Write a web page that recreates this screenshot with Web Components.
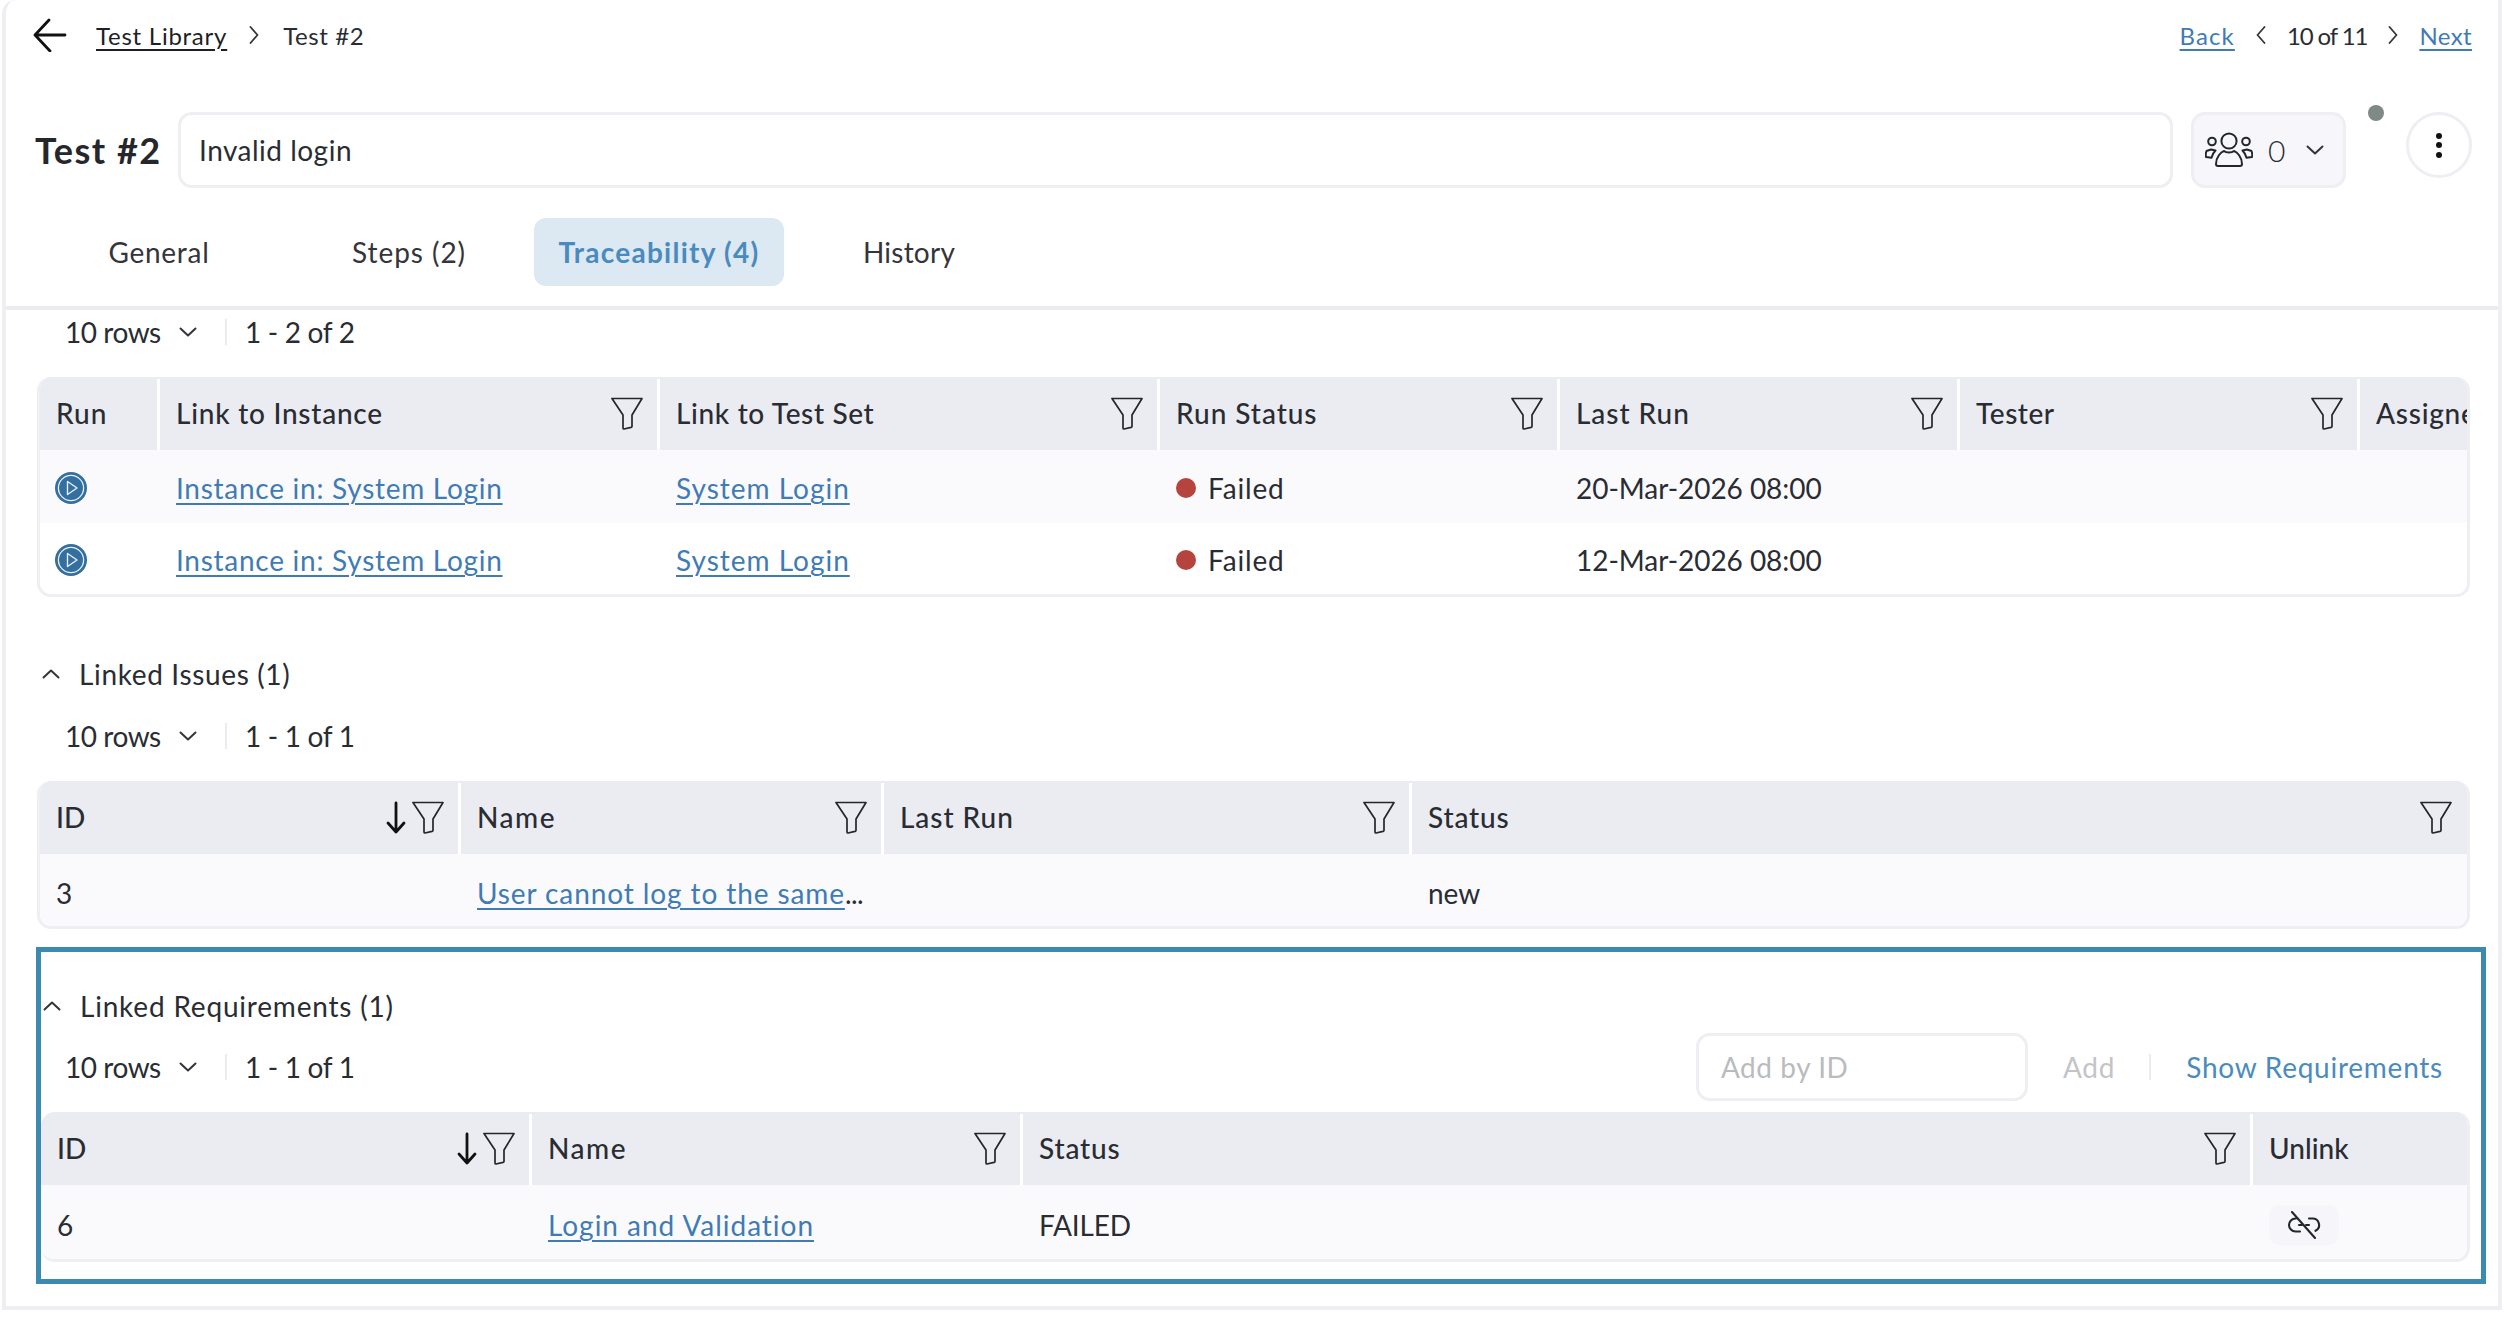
<!DOCTYPE html>
<html lang="en">
<head>
<meta charset="utf-8">
<title>Test #2</title>
<style>
html,body{margin:0;padding:0;background:#fff}
body{font-family:"Lato","Noto Sans",sans-serif;color:#2a2c33;font-size:28px}
</style>
</head>
<body>
<app-page>
  <crumb-bar></crumb-bar>
  <title-row number="Test #2" value="Invalid login" members="0"></title-row>
  <tab-bar>
    <tab-item style="letter-spacing:.75px">General</tab-item>
    <tab-item style="letter-spacing:.95px">Steps (2)</tab-item>
    <tab-item active style="letter-spacing:1.25px">Traceability (4)</tab-item>
    <tab-item style="letter-spacing:.25px">History</tab-item>
  </tab-bar>
  <page-body>
    <pager-bar rows="10 rows" range="1 - 2 of 2" style="--inset:29px"></pager-bar>
    <data-table style="--cols:120px 500px 500px 400px 400px 400px 400px;--row-h:73px;--row-top:3px">
      <t-row head>
        <t-cell head style="letter-spacing:1px">Run</t-cell>
        <t-cell head filter style="letter-spacing:.75px">Link to Instance</t-cell>
        <t-cell head filter style="letter-spacing:.65px">Link to Test Set</t-cell>
        <t-cell head filter style="letter-spacing:.95px">Run Status</t-cell>
        <t-cell head filter style="letter-spacing:.95px">Last Run</t-cell>
        <t-cell head filter style="letter-spacing:.55px">Tester</t-cell>
        <t-cell head style="letter-spacing:.75px">Assigned</t-cell>
      </t-row>
      <t-row>
        <t-cell><ui-icon name="play"></ui-icon></t-cell>
        <t-cell style="letter-spacing:.73px"><app-link>Instance in: System Login</app-link></t-cell>
        <t-cell style="letter-spacing:1px"><app-link>System Login</app-link></t-cell>
        <t-cell style="letter-spacing:.85px"><status-dot>Failed</status-dot></t-cell>
        <t-cell style="letter-spacing:-.05px">20-Mar-2026 08:00</t-cell>
        <t-cell></t-cell><t-cell></t-cell>
      </t-row>
      <t-row plain style="height:71px">
        <t-cell><ui-icon name="play"></ui-icon></t-cell>
        <t-cell style="letter-spacing:.73px"><app-link>Instance in: System Login</app-link></t-cell>
        <t-cell style="letter-spacing:1px"><app-link>System Login</app-link></t-cell>
        <t-cell style="letter-spacing:.85px"><status-dot>Failed</status-dot></t-cell>
        <t-cell style="letter-spacing:-.05px">12-Mar-2026 08:00</t-cell>
        <t-cell></t-cell><t-cell></t-cell>
      </t-row>
    </data-table>

    <section-head style="--inset:6px;margin-top:56px;letter-spacing:.65px">Linked Issues (1)</section-head>
    <pager-bar rows="10 rows" range="1 - 1 of 1" style="--inset:29px;margin-top:17px"></pager-bar>
    <data-table style="--cols:421px 423px 528px 1058px;--row-h:72px;--row-top:5px">
      <t-row head>
        <t-cell head sort filter>ID</t-cell>
        <t-cell head filter style="letter-spacing:1.55px">Name</t-cell>
        <t-cell head filter style="letter-spacing:.95px">Last Run</t-cell>
        <t-cell head filter last style="letter-spacing:.85px;--pad-r:18px">Status</t-cell>
      </t-row>
      <t-row>
        <t-cell>3</t-cell>
        <t-cell style="letter-spacing:.9px"><app-link>User cannot log to the same</app-link><span style="letter-spacing:-.5px">...</span></t-cell>
        <t-cell></t-cell>
        <t-cell>new</t-cell>
      </t-row>
    </data-table>

    <focus-box>
      <section-head style="--inset:2px;letter-spacing:.8px">Linked Requirements (1)</section-head>
      <pager-bar rows="10 rows" range="1 - 1 of 1" style="--inset:24px;--pad-r:38px;margin-top:16px">
        <add-by-id></add-by-id>
      </pager-bar>
      <data-table flush style="--cols:491px 491px 1230px 217px;--row-h:74px;--row-top:6px">
        <t-row head>
          <t-cell head sort filter>ID</t-cell>
          <t-cell head filter style="letter-spacing:1.55px">Name</t-cell>
          <t-cell head filter style="letter-spacing:.85px">Status</t-cell>
          <t-cell head last style="letter-spacing:.05px">Unlink</t-cell>
        </t-row>
        <t-row>
          <t-cell>6</t-cell>
          <t-cell style="letter-spacing:.98px"><app-link>Login and Validation</app-link></t-cell>
          <t-cell style="letter-spacing:-.15px">FAILED</t-cell>
          <t-cell><unlink-button></unlink-button></t-cell>
        </t-row>
      </data-table>
    </focus-box>
  </page-body>
</app-page>

<script>
const ICONS = {
  back: '<svg width="34" height="34" viewBox="0 0 34 34" fill="none" stroke="#111" stroke-width="2.8" stroke-linecap="round" stroke-linejoin="round"><path d="M32 17H2M16 2 2 17l15 16"/></svg>',
  right: '<svg width="10" height="18" viewBox="0 0 10 18" fill="none" stroke="#33353b" stroke-width="1.8" stroke-linecap="round" stroke-linejoin="round"><path d="M1.5 1 8.5 9 1.500 17"/></svg>',
  left: '<svg width="10" height="18" viewBox="0 0 10 18" fill="none" stroke="#33353b" stroke-width="1.8" stroke-linecap="round" stroke-linejoin="round"><path d="M8.5 1 1.5 9 8.5 17"/></svg>',
  down: '<svg width="18" height="10" viewBox="0 0 18 10" fill="none" stroke="#33353b" stroke-width="2" stroke-linecap="round" stroke-linejoin="round"><path d="M1.5 1.5 9 8.5 16.5 1.5"/></svg>',
  up: '<svg width="18" height="10" viewBox="0 0 18 10" fill="none" stroke="#33353b" stroke-width="2" stroke-linecap="round" stroke-linejoin="round"><path d="M1.5 8.5 9 1.5 16.5 8.5"/></svg>',
  filter: '<svg width="32" height="33" viewBox="0 0 32 33" fill="none" stroke="#23262c" stroke-width="1.7" stroke-linejoin="round"><path d="M1 1.5H31L21 18V29.5Q21 30 20 30.4L13 32Q12 32 12 31V18Z"/></svg>',
  sort: '<svg width="20" height="33" viewBox="0 0 20 33" fill="none" stroke="#111" stroke-width="2.8" stroke-linecap="round" stroke-linejoin="round"><path d="M10 2V31M2 22l8 9 8-9"/></svg>',
  play: '<svg width="32" height="32" viewBox="0 0 32 32"><circle cx="16" cy="16" r="16" fill="#336f9f"/><circle cx="16" cy="16" r="12.6" fill="none" stroke="#e8f0f6" stroke-width="1.3"/><path d="M12.5 9.5 22 16l-9.5 6.5Z" fill="none" stroke="#e8f0f6" stroke-width="1.4" stroke-linejoin="round"/></svg>',
  users: '<svg width="48" height="36" viewBox="0 0 48 36" fill="none" stroke="#23262c" stroke-width="2" stroke-linecap="round" stroke-linejoin="round"><circle cx="24" cy="9" r="7.6"/><circle cx="7" cy="9.5" r="3.8"/><circle cx="41" cy="9.5" r="3.8"/><path d="M11 32c0-7 5-12 8-13 2 2 8 2 10 0 3 1 8 6 8 13 0 1.500-1 2-2 2H13c-1 0-2-.5-2-2Z"/><path d="M6 17.500 1.500 19C.7 21 .5 23 1 25l5.500.8C7 23 8 21 10.500 18.500Z"/><path d="M42 17.500 46.500 19c.8 2 1 4 .5 6l-5.500.8C41 23 40 21 37.500 18.500Z"/></svg>',
  unlink: '<svg width="34" height="28" viewBox="0 0 34 28" fill="none" stroke="#23262c" stroke-width="2.1" stroke-linecap="round" stroke-linejoin="round"><path d="M9 7.500H8.500a6.500 6.500 0 0 0 0 13h4.500"/><path d="M22 7.500h3.500a6.500 6.500 0 0 1 3 12.300"/><path d="M12 14h3M19 14h3"/><path d="M5 1l23 26"/></svg>'
};

function define(tag, css, html) {
  class El extends HTMLElement {
    constructor() {
      super();
      this.attachShadow({ mode: 'open' });
    }
    connectedCallback() {
      const h = typeof html === 'function' ? html(this) : html;
      this.shadowRoot.innerHTML = '<style>' + css + '</style>' + h;
    }
  }
  customElements.define(tag, El);
}

define('app-page', `
  :host{display:flex;flex-direction:column;box-sizing:border-box;width:2500px;height:1310px;margin-left:2px;
    border:solid #eeeef3;border-width:0 4px 4px 4px;border-top-left-radius:14px;background:#fff;overflow:hidden}
`, '<slot></slot>');

define('crumb-bar', `
  :host{display:flex;align-items:center;height:70px;padding:0 26px 0 27px;font-size:24px}
  .back{display:flex;margin-right:29px}
  u{text-underline-offset:4px;text-decoration-thickness:2px;color:#1d1f24;letter-spacing:.75px}
  .chev{display:flex;margin:0 24px 0 22px}
  .grow{flex:1}
  .crumb{letter-spacing:.6px}
  .pos{letter-spacing:-1.1px}
`, () => `
  <span class="back">${ICONS.back}</span>
  <u>Test Library</u><span class="chev">${ICONS.right}</span><span class="crumb">Test #2</span>
  <span class="grow"></span>
  <u style="color:#3f7bb5;letter-spacing:1.1px">Back</u>
  <span class="chev" style="margin:0 21px">${ICONS.left}</span>
  <span class="pos">10 of 11</span>
  <span class="chev" style="margin:0 21px">${ICONS.right}</span>
  <u style="color:#3f7bb5;letter-spacing:.4px">Next</u>
`);

define('title-row', `
  :host{display:flex;align-items:flex-start;height:76px;margin-top:42px;padding:0 28px 0 29px}
  h1{margin:0;font-size:36px;font-weight:700;letter-spacing:1.5px;line-height:76px;width:143px;flex:none;color:#25272d;white-space:nowrap}
  .field{box-sizing:border-box;flex:none;width:1995px;height:76px;border:3px solid #eeeef3;border-radius:14px;
    display:flex;align-items:center;padding-left:18px;font-size:28px;letter-spacing:.5px}
  .members{box-sizing:border-box;flex:none;width:155px;height:76px;margin-left:18px;background:#f7f7fb;border:3px solid #eeeef3;
    border-radius:14px;display:flex;align-items:center;padding-left:11px;font-size:30px;font-weight:300}
  .members .n{margin:0 21px 0 15px}
  .dot{flex:none;width:16px;height:16px;border-radius:50%;background:#7f8a87;margin:-7px 0 0 22px}
  .kebab{flex:none;box-sizing:border-box;width:66px;height:66px;margin:0 0 0 22px;border:3px solid #eeeef3;border-radius:50%;
    display:flex;flex-direction:column;align-items:center;justify-content:center;gap:3.500px}
  .kebab i{width:6px;height:6px;background:#111;border-radius:50%}
`, (el) => `
  <h1>${el.getAttribute('number')}</h1>
  <div class="field">${el.getAttribute('value')}</div>
  <div class="members">${ICONS.users}<span class="n">${el.getAttribute('members')}</span>${ICONS.down}</div>
  <div class="dot"></div>
  <div class="kebab"><i></i><i></i><i></i></div>
`);

define('tab-bar', `
  :host{display:grid;grid-template-columns:repeat(4,250px);height:88px;margin-top:30px;padding:0 0 0 28px;
    border-bottom:4px solid #ebebf1;align-items:start}
`, '<slot></slot>');

define('tab-item', `
  :host{display:flex;align-items:center;justify-content:center;height:68px;border-radius:12px;font-size:28px;color:#33353b}
  :host([active]){background:#dce8f2;color:#4a8bbf;font-weight:700}
`, '<slot></slot>');

define('page-body', `
  :host{display:block;padding-left:30px;width:2450px}
`, '<slot></slot>');

define('pager-bar', `
  :host{display:flex;align-items:center;height:44px;padding-left:var(--inset,29px);font-size:28px;padding-right:var(--pad-r,27px)}
  .rows{width:96px;flex:none;white-space:nowrap;letter-spacing:-.45px}
  .chev{display:flex;margin-left:18px}
  .sep{width:2px;height:26px;background:#ebebf1;margin:0 18px 0 28px}
  .range{letter-spacing:-.3px}
  .grow{flex:1}
`, (el) => `
  <span class="rows">${el.getAttribute('rows')}</span><span class="chev">${ICONS.down}</span>
  <span class="sep"></span><span class="range">${el.getAttribute('range')}</span>
  <span class="grow"></span><slot></slot>
`);

define('add-by-id', `
  :host{display:flex;align-items:center;font-size:28px}
  .in{box-sizing:border-box;width:332px;height:68px;border:3px solid #eeeef3;border-radius:14px;color:#b9bbc0;
    display:flex;align-items:center;padding-left:22px;letter-spacing:.55px}
  .add{color:#c3c4c8;margin:0 34px 0 35px;letter-spacing:.75px}
  .sep{width:2px;height:26px;background:#ebebf1;margin-right:35px}
  .show{color:#4a8bbf;letter-spacing:.75px}
`, `
  <div class="in">Add by ID</div><span class="add">Add</span><span class="sep"></span><span class="show">Show Requirements</span>
`);

define('section-head', `
  :host{display:flex;align-items:center;box-sizing:border-box;height:44px;padding-left:var(--inset,6px);padding-bottom:2px;font-size:28px}
  .c{display:flex;margin-right:19px}
`, () => `<span class="c">${ICONS.up}</span><slot></slot>`);

define('data-table', `
  :host{display:block;box-sizing:border-box;width:2433px;margin:23px 0 0 1px;border:solid #eeeef3;border-width:0 3px 3px 3px;
    border-radius:14px;overflow:hidden}
  :host([flush]){width:2429px;margin-left:0;border-left:0}
`, '<slot></slot>');

define('t-row', `
  :host{display:grid;grid-template-columns:var(--cols);height:var(--row-h,72px);box-sizing:border-box;padding-top:var(--row-top,3px);background:#fafafd;overflow:hidden}
  :host([plain]){background:#fff}
  :host([head]){height:73px;padding-top:0;background:#ebecf1}
`, '<slot></slot>');

define('t-cell', `
  :host{display:flex;align-items:center;box-sizing:border-box;padding-left:16px;font-size:28px;white-space:nowrap;min-width:0;color:#2a2c33}
  :host([head]){border-right:3px solid #fff;margin-top:2px;padding-right:var(--pad-r,14px);padding-bottom:3px;font-weight:500}
  :host([last]){border-right:0}
  .grow{flex:1}
  .ic{display:flex;margin-left:6px;letter-spacing:0}
`, (el) => `
  <slot></slot>
  ${el.hasAttribute('head') ? '<span class="grow"></span>' : ''}
  ${el.hasAttribute('sort') ? `<span class="ic">${ICONS.sort}</span>` : ''}
  ${el.hasAttribute('filter') ? `<span class="ic">${ICONS.filter}</span>` : ''}
`);

define('app-link', `
  :host{display:inline;color:#3f7bb5;text-decoration:underline;text-underline-offset:4px;text-decoration-thickness:2px}
`, '<slot></slot>');

define('status-dot', `
  :host{display:inline-flex;align-items:center;gap:12px}
  i{width:20px;height:20px;border-radius:50%;background:#b5443f}
`, '<i></i><slot></slot>');

define('ui-icon', `:host{display:flex;margin-left:-1px}`, (el) => ICONS[el.getAttribute('name')]);

define('focus-box', `
  :host{display:block;box-sizing:border-box;width:2450px;height:337px;margin-top:18px;border:5px solid #3d8ab0;padding-top:33px}
`, '<slot></slot>');

define('unlink-button', `
  :host{display:flex;align-items:center;justify-content:center;width:70px;height:40px;background:#f6f6fa;border-radius:10px}
`, () => ICONS.unlink);
</script>
</body>
</html>
